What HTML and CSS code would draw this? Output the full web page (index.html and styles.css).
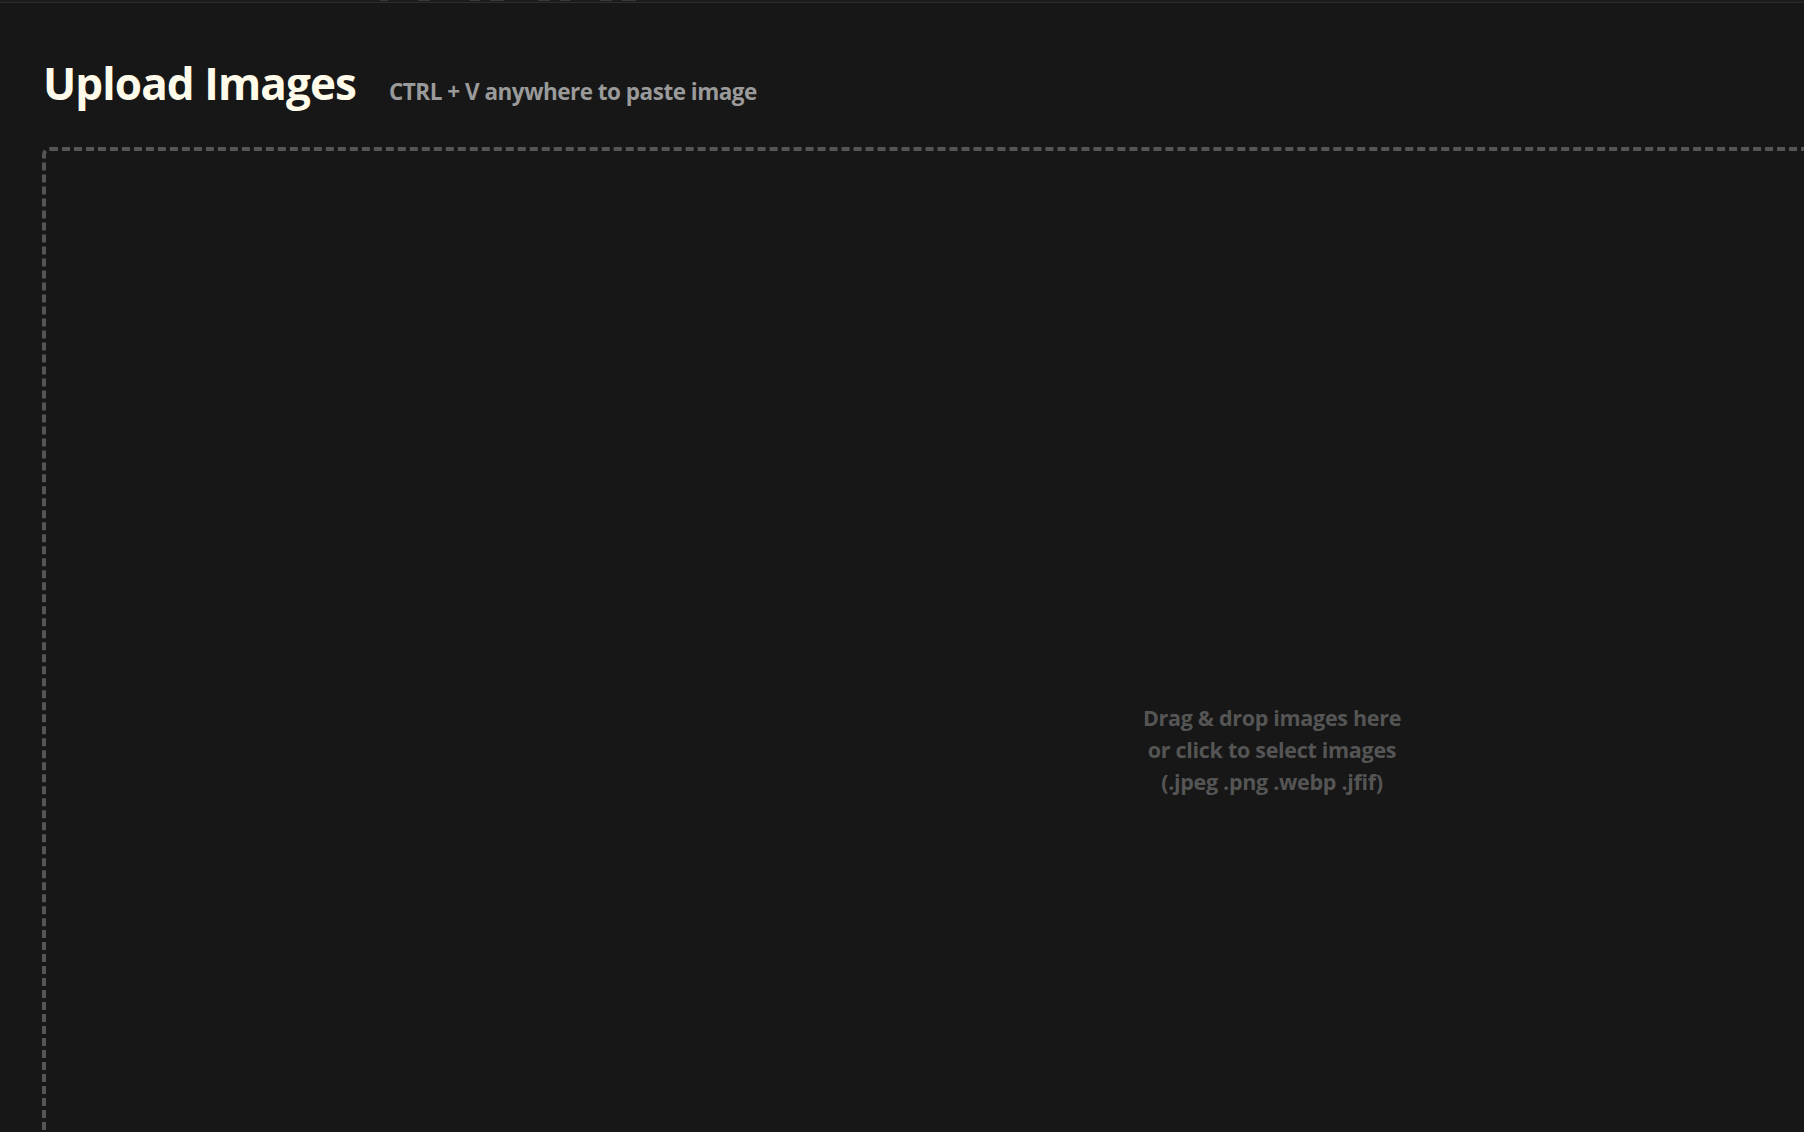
FILE: index.html
```html
<!DOCTYPE html>
<html lang="en">
<head>
<meta charset="utf-8">
<title>Upload Images</title>
<link rel="stylesheet" href="styles.css">
</head>
<body>
<div class="topbar">
  <div class="topbar-bits">
    <span class="bit b1"></span><span class="bit b2"></span><span class="bit b3"></span><span class="bit b4"></span><span class="bit b5"></span><span class="bit b6"></span><span class="bit b7"></span><span class="bit b8"></span>
  </div>
</div>
<main class="page">
  <div class="heading">
    <h1 class="title">Upload Images</h1>
    <span class="hint">CTRL + V anywhere to paste image</span>
  </div>
  <div class="dropzone">
    <p class="drop-text">Drag &amp; drop images here<br>or click to select images<br>(.jpeg .png .webp .jfif)</p>
  </div>
</main>
</body>
</html>
```
FILE: styles.css
```css
html, body {
  margin: 0;
  padding: 0;
  overflow: hidden;
  background: #171717;
  height: 100%;
}
body {
  font-family: "Open Sans", Lato, "Liberation Sans", sans-serif;
}
.topbar {
  height: 2px;
  background: #1c1c1c;
  border-bottom: 1px solid #2c2c2c;
}
.topbar-bits {
  display: flex;
  gap: 10px;
  padding-left: 380px;
  height: 1px;
}
.bit {
  display: block;
  height: 1px;
  background: #3a3a3a;
}
.b1 { width: 8px; }
.b2 { width: 12px; margin-left: 20px; }
.b3 { width: 10px; margin-left: 30px; }
.b4 { width: 14px; }
.b5 { width: 12px; margin-left: 24px; }
.b6 { width: 10px; }
.b7 { width: 12px; margin-left: 20px; }
.b8 { width: 14px; }
.page {
  padding: 0 0 0 42px;
}
.heading {
  display: flex;
  align-items: baseline;
  gap: 33px;
  height: 144px;
  box-sizing: border-box;
  padding-top: 58px;
  padding-left: 1px;
}
.title {
  margin: 0;
  font-size: 44px;
  font-weight: 700;
  color: #fffbeb;
  line-height: 1;
  letter-spacing: -0.9px;
}
.hint {
  font-size: 22.5px;
  font-weight: 700;
  color: #9a9a9a;
  letter-spacing: -0.5px;
}
.dropzone {
  width: 2460px;
  height: 1206px;
  box-sizing: border-box;
  border: 4px dashed #555555;
  border-radius: 8px;
  display: flex;
  align-items: center;
  justify-content: center;
}
.drop-text {
  margin: 0;
  text-align: center;
  font-size: 21.5px;
  line-height: 32px;
  font-weight: 700;
  color: #555555;
  letter-spacing: -0.3px;
}
```
